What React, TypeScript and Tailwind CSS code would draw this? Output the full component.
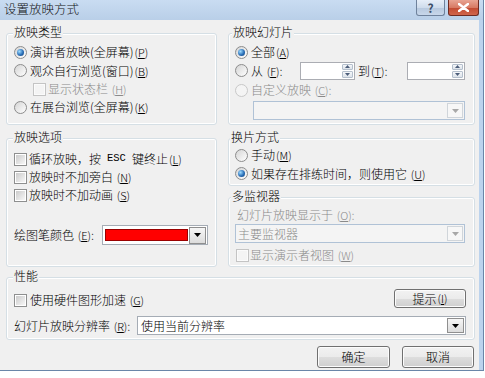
import type { ReactNode } from 'react'

const cjk = "font-['Noto_Sans_CJK_SC','Noto_Sans',sans-serif]"
const btn = 'flex items-center justify-center rounded-[3px] border border-[#707070] bg-[linear-gradient(#f2f2f2_0%,#ebebeb_50%,#dddddd_51%,#cfcfcf_100%)] shadow-[inset_0_0_0_1px_#fcfcfc]'
const gray = 'text-[#8a8a8a]'

const K = ({ c }: { c: string }) => (
  <span className="ml-[1px] text-[11px]">(<span className="underline underline-offset-[1px]">{c}</span>)</span>
)

function Radio({ on, off }: { on?: boolean; off?: boolean }) {
  return (
    <span
      className={`flex h-[13px] w-[13px] shrink-0 items-center justify-center rounded-full border ${
        off ? 'border-[#c8c8c8] bg-[#f4f4f4]' : 'border-[#8c8c8c] bg-[linear-gradient(135deg,#d4d4d4,#ffffff)]'
      }`}
    >
      {on && <span className="h-[7px] w-[7px] rounded-full bg-[radial-gradient(circle_at_35%_35%,#9fdcff_0%,#2a6fb8_55%,#0e3c72_100%)]" />}
    </span>
  )
}

function Check({ off }: { off?: boolean }) {
  return (
    <span className={`flex h-[13px] w-[13px] shrink-0 items-center justify-center border ${off ? 'border-[#c4c4c4] bg-[#fbfbfb]' : 'border-[#8e8f8f] bg-white'}`}>
      <span className={`h-[9px] w-[9px] ${off ? 'bg-[#f4f4f4]' : 'bg-[linear-gradient(135deg,#cbcbcb,#f7f7f7)]'}`} />
    </span>
  )
}

function Group({ title, left, className, children }: { title: string; left: string; className: string; children: ReactNode }) {
  return (
    <div className={`relative rounded-[3px] border border-[#d5dfe5] shadow-[inset_0_0_0_1px_#ffffff] ${className}`}>
      <span className={`absolute top-[-9px] bg-[#f0f0f0] px-[1px] leading-[14px] ${left}`}>{title}</span>
      {children}
    </div>
  )
}

function Down({ off }: { off?: boolean }) {
  return (
    <svg width="7" height="4" viewBox="0 0 7 4">
      <path d="M0 0h7L3.5 4z" fill={off ? '#a8a8a8' : '#000'} />
    </svg>
  )
}

function Spin({ w }: { w: string }) {
  return (
    <div className={`flex h-[18px] justify-end border border-[#abadb3] bg-white p-[1px] ${w}`}>
      <div className="flex w-[11px] flex-col gap-[1px]">
        <span className="flex flex-1 items-center justify-center rounded-[1px] border border-[#b4bfcc] bg-[linear-gradient(#f4f6f9,#dde3ea)]">
          <svg width="5" height="3" viewBox="0 0 5 3"><path d="M2.5 0L5 3H0z" fill="#4c5d7a" /></svg>
        </span>
        <span className="flex flex-1 items-center justify-center rounded-[1px] border border-[#b4bfcc] bg-[linear-gradient(#f4f6f9,#dde3ea)]">
          <svg width="5" height="3" viewBox="0 0 5 3"><path d="M0 0h5L2.5 3z" fill="#4c5d7a" /></svg>
        </span>
      </div>
    </div>
  )
}

function OffCombo({ w, children }: { w: string; children?: ReactNode }) {
  return (
    <div className={`flex h-[19px] items-center justify-between border border-[#b0c2d6] bg-[#f4f4f4] pl-[2px] pr-[1px] ${w}`}>
      <span className={gray}>{children}</span>
      <span className="flex h-[15px] w-[16px] items-center justify-center border border-[#d0d5da] bg-[#f7f7f7]">
        <Down off />
      </span>
    </div>
  )
}

export default function App() {
  return (
    <div className={`h-[378px] w-[485px] bg-white text-[12px] font-light text-black ${cjk}`}>
      <div className="flex w-[484px] flex-col border-b border-r border-[#6a86a8] bg-[#bcd3ed]">
        {/* title bar */}
        <div className="flex h-[20px] items-start justify-between bg-[linear-gradient(#c9dcf2,#b9cfe8)]">
          <span className="pl-[4px] text-[12.5px] leading-[17px] text-[#111]">设置放映方式</span>
          <div className="flex gap-[3px] pr-[4px]">
            <span className="flex h-[16px] w-[29px] items-center justify-center rounded-b-[3px] border border-t-0 border-[#6f829c] bg-[linear-gradient(#e6eef8_0%,#cfdcec_50%,#b6c8de_51%,#c8d7ea_100%)] text-[12px] font-bold leading-none text-[#3c4e69]">
              ?
            </span>
            <span className="flex h-[16px] w-[31px] items-center justify-center rounded-b-[3px] border border-t-0 border-[#6e2b22] bg-[linear-gradient(#e8a493_0%,#d77a63_50%,#c24a31_51%,#d0654b_100%)]">
              <svg width="11" height="9" viewBox="0 0 11 9">
                <path d="M1 1l9 7M10 1L1 8" stroke="#fff" strokeWidth="2.4" strokeLinecap="round" />
              </svg>
            </span>
          </div>
        </div>

        <div className="h-[350px] w-[479px] bg-[#f0f0f0] pl-[6px] pt-[13px]">
          <div className="flex gap-[11px]">
            {/* left column */}
            <div className="flex w-[211px] flex-col">
              <Group title="放映类型" left="left-[6px]" className="h-[92px] pl-[7px] pt-[9px]">
                <div className="flex h-[18px] items-center gap-[3px]">
                  <Radio on />
                  <span>演讲者放映(全屏幕)<K c="P" /></span>
                </div>
                <div className="flex h-[19px] items-center gap-[3px]">
                  <Radio />
                  <span>观众自行浏览(窗口)<K c="B" /></span>
                </div>
                <div className={`flex h-[18px] items-center gap-[2px] pl-[19px] ${gray}`}>
                  <Check off />
                  <span>显示状态栏 <K c="H" /></span>
                </div>
                <div className="flex h-[18px] items-center gap-[3px]">
                  <Radio />
                  <span>在展台浏览(全屏幕)<K c="K" /></span>
                </div>
              </Group>

              <Group title="放映选项" left="left-[6px]" className="mt-[13px] h-[129px] pl-[7px] pt-[11px]">
                <div className="flex h-[18px] items-center gap-[2px]">
                  <Check />
                  <span className="flex items-center">
                    循环放映，按<span className="mx-[6px] font-['Liberation_Mono',monospace] text-[10.5px]">ESC</span>键终止 <K c="L" />
                  </span>
                </div>
                <div className="flex h-[18px] items-center gap-[2px]">
                  <Check />
                  <span>放映时不加旁白 <K c="N" /></span>
                </div>
                <div className="flex h-[18px] items-center gap-[2px]">
                  <Check />
                  <span>放映时不加动画 <K c="S" /></span>
                </div>
                <div className="mt-[21px] flex h-[20px] items-center">
                  <span className="w-[88px]">绘图笔颜色 <K c="E" />:</span>
                  <div className="flex h-[20px] w-[106px] items-center justify-between border border-[#a5acb5] bg-white pl-[2px] pr-[1px]">
                    <span className="h-[12px] w-[83px] border border-[#9a0000] bg-[#ff0000]" />
                    <span className="flex h-[17px] w-[17px] items-center justify-center border border-[#8f8f8f] bg-[linear-gradient(#f6f6f6,#dcdcdc)]">
                      <Down />
                    </span>
                  </div>
                </div>
              </Group>
            </div>

            {/* right column */}
            <div className="flex w-[247px] flex-col">
              <Group title="放映幻灯片" left="left-[3px]" className="h-[92px] pl-[6px] pt-[9px]">
                <div className="flex h-[18px] items-center gap-[3px]">
                  <Radio on />
                  <span>全部<K c="A" /></span>
                </div>
                <div className="flex h-[19px] items-center">
                  <div className="flex w-[65px] items-center gap-[3px]">
                    <Radio />
                    <span>从 <K c="F" />:</span>
                  </div>
                  <Spin w="w-[55px]" />
                  <span className="ml-[3px] w-[49px]">到<K c="T" />:</span>
                  <Spin w="w-[58px]" />
                </div>
                <div className={`flex h-[20px] items-center gap-[3px] ${gray}`}>
                  <Radio off />
                  <span>自定义放映 <K c="C" />:</span>
                </div>
                <div className="ml-[18px] mt-[1px]">
                  <OffCombo w="w-[212px]" />
                </div>
              </Group>

              <Group title="换片方式" left="left-[1px]" className="mt-[13px] h-[48px] pl-[6px] pt-[7px]">
                <div className="flex h-[18px] items-center gap-[3px]">
                  <Radio />
                  <span>手动<K c="M" /></span>
                </div>
                <div className="flex h-[19px] items-center gap-[3px]">
                  <Radio on />
                  <span>如果存在排练时间，则使用它 <K c="U" /></span>
                </div>
              </Group>

              <Group title="多监视器" left="left-[2px]" className="mt-[11px] h-[70px] pl-[6px] pt-[8px]">
                <div className={`ml-[2px] flex h-[18px] items-center ${gray}`}>
                  <span>幻灯片放映显示于 <K c="O" />:</span>
                </div>
                <OffCombo w="w-[230px]">主要监视器</OffCombo>
                <div className={`ml-[1px] mt-[3px] flex h-[18px] items-center gap-[1px] ${gray}`}>
                  <Check off />
                  <span>显示演示者视图 <K c="W" /></span>
                </div>
              </Group>
            </div>
          </div>

          <Group title="性能" left="left-[6px]" className="mt-[10px] h-[63px] w-[469px] pl-[7px] pr-[8px] pt-[11px]">
            <div className="flex h-[19px] items-center justify-between">
              <div className="mt-[3px] flex items-center gap-[3px]">
                <Check />
                <span>使用硬件图形加速 <K c="G" /></span>
              </div>
              <span className={`h-[19px] w-[72px] ${btn}`}>
                提示 <K c="I" />
              </span>
            </div>
            <div className="mt-[8px] flex h-[19px] items-center">
              <span className="w-[123px]">幻灯片放映分辨率 <K c="R" />:</span>
              <div className="flex h-[19px] flex-1 items-center justify-between border border-[#a5acb5] bg-white pl-[3px] pr-[1px]">
                <span>使用当前分辨率</span>
                <span className="flex h-[15px] w-[17px] items-center justify-center border border-[#8f8f8f] bg-[linear-gradient(#f6f6f6,#dcdcdc)]">
                  <Down />
                </span>
              </div>
            </div>
          </Group>

          <div className="mt-[6px] flex w-[469px] justify-end gap-[12px] pr-[1px]">
            <span className={`h-[22px] w-[73px] ${btn} border-[#3c7fb1] shadow-[inset_0_0_0_1px_#c2e6f8]`}>确定</span>
            <span className={`h-[22px] w-[72px] ${btn}`}>取消</span>
          </div>
        </div>
      </div>
    </div>
  )
}
